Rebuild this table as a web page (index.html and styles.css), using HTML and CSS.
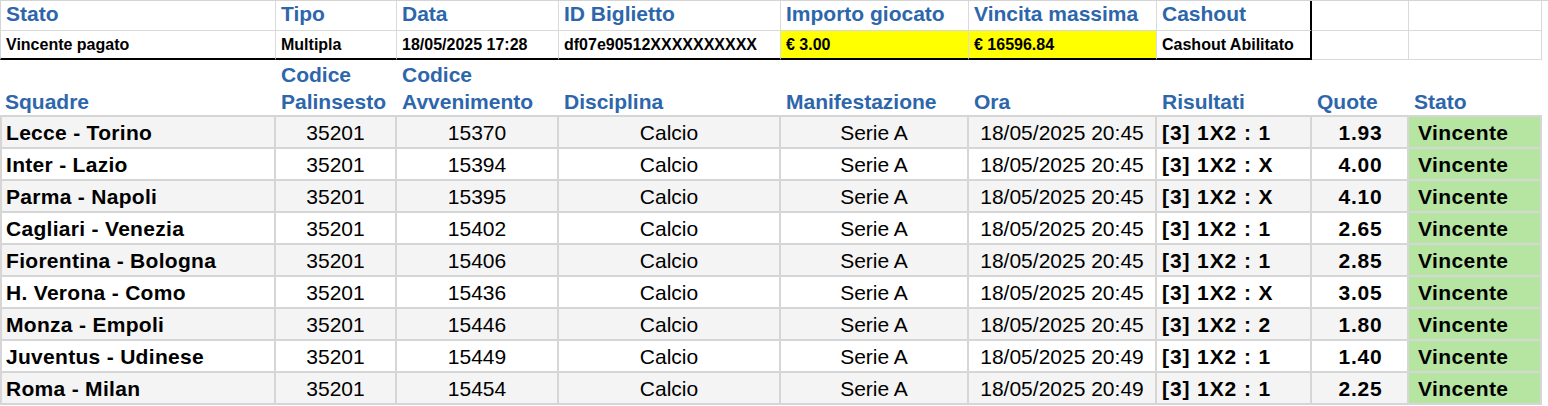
FILE: index.html
```html
<!DOCTYPE html>
<html lang="it">
<head>
<meta charset="utf-8">
<title>Biglietto</title>
<link rel="stylesheet" href="styles.css">
</head>
<body>
<div class="sheet">
  <div class="summary">
    <div class="c h first">Stato</div>
    <div class="c h">Tipo</div>
    <div class="c h">Data</div>
    <div class="c h">ID Biglietto</div>
    <div class="c h">Importo giocato</div>
    <div class="c h">Vincita massima</div>
    <div class="c h boxr">Cashout</div>
    <div class="c"></div>
    <div class="c"></div>

    <div class="c v r2 first boxb">Vincente pagato</div>
    <div class="c v r2 boxb">Multipla</div>
    <div class="c v r2 boxb">18/05/2025 17:28</div>
    <div class="c v r2 boxb">df07e90512XXXXXXXXXX</div>
    <div class="c v r2 boxb yellow">€ 3.00</div>
    <div class="c v r2 boxb yellow">€ 16596.84</div>
    <div class="c v r2 boxb boxr">Cashout Abilitato</div>
    <div class="c r2"></div>
    <div class="c r2"></div>
  </div>

  <div class="matches">
    <div class="th">Squadre</div>
    <div class="th">Codice<br>Palinsesto</div>
    <div class="th">Codice<br>Avvenimento</div>
    <div class="th">Disciplina</div>
    <div class="th">Manifestazione</div>
    <div class="th">Ora</div>
    <div class="th">Risultati</div>
    <div class="th">Quote</div>
    <div class="th">Stato</div>

    <div class="row odd">
      <div class="d first team">Lecce - Torino</div><div class="d ctr">35201</div><div class="d ctr">15370</div><div class="d ctr">Calcio</div><div class="d ctr">Serie A</div><div class="d ctr">18/05/2025 20:45</div><div class="d res">[3] 1X2 : 1</div><div class="d quote">1.93</div><div class="d win">Vincente</div>
    </div>
    <div class="row">
      <div class="d first team">Inter - Lazio</div><div class="d ctr">35201</div><div class="d ctr">15394</div><div class="d ctr">Calcio</div><div class="d ctr">Serie A</div><div class="d ctr">18/05/2025 20:45</div><div class="d res">[3] 1X2 : X</div><div class="d quote">4.00</div><div class="d win">Vincente</div>
    </div>
    <div class="row odd">
      <div class="d first team">Parma - Napoli</div><div class="d ctr">35201</div><div class="d ctr">15395</div><div class="d ctr">Calcio</div><div class="d ctr">Serie A</div><div class="d ctr">18/05/2025 20:45</div><div class="d res">[3] 1X2 : X</div><div class="d quote">4.10</div><div class="d win">Vincente</div>
    </div>
    <div class="row">
      <div class="d first team">Cagliari - Venezia</div><div class="d ctr">35201</div><div class="d ctr">15402</div><div class="d ctr">Calcio</div><div class="d ctr">Serie A</div><div class="d ctr">18/05/2025 20:45</div><div class="d res">[3] 1X2 : 1</div><div class="d quote">2.65</div><div class="d win">Vincente</div>
    </div>
    <div class="row odd">
      <div class="d first team">Fiorentina - Bologna</div><div class="d ctr">35201</div><div class="d ctr">15406</div><div class="d ctr">Calcio</div><div class="d ctr">Serie A</div><div class="d ctr">18/05/2025 20:45</div><div class="d res">[3] 1X2 : 1</div><div class="d quote">2.85</div><div class="d win">Vincente</div>
    </div>
    <div class="row">
      <div class="d first team">H. Verona - Como</div><div class="d ctr">35201</div><div class="d ctr">15436</div><div class="d ctr">Calcio</div><div class="d ctr">Serie A</div><div class="d ctr">18/05/2025 20:45</div><div class="d res">[3] 1X2 : X</div><div class="d quote">3.05</div><div class="d win">Vincente</div>
    </div>
    <div class="row odd">
      <div class="d first team">Monza - Empoli</div><div class="d ctr">35201</div><div class="d ctr">15446</div><div class="d ctr">Calcio</div><div class="d ctr">Serie A</div><div class="d ctr">18/05/2025 20:45</div><div class="d res">[3] 1X2 : 2</div><div class="d quote">1.80</div><div class="d win">Vincente</div>
    </div>
    <div class="row">
      <div class="d first team">Juventus - Udinese</div><div class="d ctr">35201</div><div class="d ctr">15449</div><div class="d ctr">Calcio</div><div class="d ctr">Serie A</div><div class="d ctr">18/05/2025 20:49</div><div class="d res">[3] 1X2 : 1</div><div class="d quote">1.40</div><div class="d win">Vincente</div>
    </div>
    <div class="row odd">
      <div class="d first team">Roma - Milan</div><div class="d ctr">35201</div><div class="d ctr">15454</div><div class="d ctr">Calcio</div><div class="d ctr">Serie A</div><div class="d ctr">18/05/2025 20:49</div><div class="d res">[3] 1X2 : 1</div><div class="d quote">2.25</div><div class="d win">Vincente</div>
    </div>
  </div>
</div>
</body>
</html>
```

FILE: styles.css
```css
* { box-sizing: border-box; }
html, body { margin: 0; padding: 0; background: #ffffff; }
body {
  font-family: "Liberation Sans", Arial, sans-serif;
  color: #000;
  width: 1548px;
  height: 406px;
  overflow: hidden;
}
.sheet { width: 1548px; }

.summary, .matches {
  display: grid;
  grid-template-columns: 276px 121px 162px 222px 188px 188px 155px 97px 133px;
}

/* summary block */
.summary { border-top: 1px solid #d4d4d4; }
.c {
  height: 30px;
  border-right: 1px solid #dadada;
  border-bottom: 1px solid #dadada;
  padding-left: 5px;
  display: flex;
  align-items: center;
  white-space: nowrap;
}
.c.r2 { height: 29px; }
.c.first { border-left: 1px solid #d4d4d4; }
.h {
  color: #2d66ab;
  font-weight: bold;
  font-size: 21px;
  padding-bottom: 3px;
}
.v {
  font-weight: bold;
  font-size: 16px;
  padding-top: 1px;
}
.yellow { background: #ffff00; }
.boxb { border-bottom: 2px solid #000; }
.boxr { border-right: 2px solid #000; }

/* matches table */
.th {
  height: 57px;
  color: #2d66ab;
  font-weight: bold;
  font-size: 21px;
  line-height: 27px;
  padding-left: 5px;
  padding-bottom: 0;
  display: flex;
  align-items: flex-end;
  border-bottom: 2px solid #d6d6d6;
  white-space: nowrap;
}
.row { display: contents; }
.d {
  height: 32px;
  font-size: 21px;
  border-right: 2px solid #d6d6d6;
  border-bottom: 2px solid #d6d6d6;
  display: flex;
  align-items: center;
  white-space: nowrap;
  padding-top: 1px;
}
.row.odd .d { background: #f4f4f4; }
.d.first { border-left: 2px solid #d6d6d6; }
.team { font-weight: bold; padding-left: 4px; letter-spacing: 0.3px; }
.ctr { justify-content: center; }
.res { font-weight: bold; padding-left: 5px; letter-spacing: 0.9px; }
.quote { font-weight: bold; justify-content: center; letter-spacing: 0.8px; padding-left: 2px; }
.row .d.win { background: #b6e5a2; font-weight: bold; padding-left: 9px; letter-spacing: 0.4px; }
```
